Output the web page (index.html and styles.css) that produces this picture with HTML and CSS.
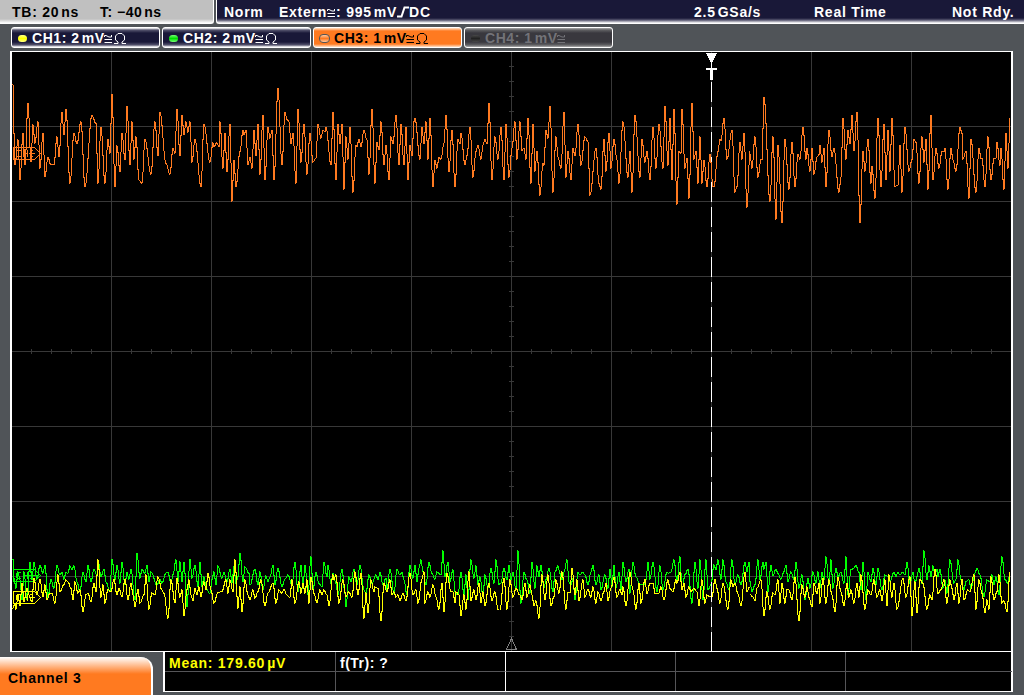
FILE: index.html
```html
<!DOCTYPE html>
<html lang="en">
<head>
    <meta charset="UTF-8">
    <title>Oscilloscope</title>
    <link rel="stylesheet" href="styles.css">
</head>
<body>

<div class="topbar">
    <div class="timebase">
        <span class="tb">TB: 20<i></i>ns</span>
        <span class="tpos">T: &minus;40<i></i>ns</span>
    </div>
    <div class="status">
        <span class="norm">Norm</span>
        <span class="source">Extern<svg class="sym" viewBox="0 0 9 9"><use href="#coupling"/></svg>: 995<i></i>mV<svg class="edge" viewBox="0 0 12 12"><path d="M0 10.5h4.5l3-9H12"/></svg>DC</span>
        <span class="rate">2.5<i></i>GSa/s</span>
        <span class="mode">Real Time</span>
        <span class="ready">Not Rdy.</span>
    </div>
</div>

<div class="channels">
    <div class="chip ch1"><b class="led"></b><span>CH1: 2<i></i>mV</span><svg class="sym" viewBox="0 0 9 9"><use href="#coupling"/></svg><svg class="ohm" viewBox="0 0 12 11"><use href="#ohm"/></svg></div>
    <div class="chip ch2"><b class="led"></b><span>CH2: 2<i></i>mV</span><svg class="sym" viewBox="0 0 9 9"><use href="#coupling"/></svg><svg class="ohm" viewBox="0 0 12 11"><use href="#ohm"/></svg></div>
    <div class="chip ch3"><b class="led"></b><span>CH3: 1<i></i>mV</span><svg class="sym" viewBox="0 0 9 9"><use href="#coupling"/></svg><svg class="ohm" viewBox="0 0 12 11"><use href="#ohm"/></svg></div>
    <div class="chip ch4"><b class="led"></b><span>CH4: 1<i></i>mV</span><svg class="sym" viewBox="0 0 9 9"><use href="#coupling"/></svg></div>
</div>

<div class="screen">
<svg class="plot" viewBox="12 52 999 599">
    <defs>
        <g id="coupling"><path d="M.5 3V1.5h1.5l3 1.5h2.5V1M.5 5.5h7.5M.5 8.5h7.5"/></g>
        <g id="ohm"><path d="M0 10.5h4V9L1.5 7V3L4 .5h4L10.5 3v4L8 9v1.5h4"/></g>
        <g id="tag"><path d="M.5 .5h21l6 6-6 6H.5zM4 3.5h4M4 9.5h4M3.5 4v5M10.5 3v7M14.5 3v7M10 6.5h5M17 3.5h3M16 6.5h6M17 9.5h3"/></g>
    </defs>

    <path class="grid" d="M111.5 52v599M211.5 52v599M311.5 52v599M411.5 52v599M511.5 52v599M611.5 52v599M711.5 52v599M811.5 52v599M911.5 52v599
        M12 126.5h999M12 201.5h999M12 276.5h999M12 351.5h999M12 426.5h999M12 501.5h999M12 576.5h999"/>
    <!-- minor divisions on the centre lines -->
    <path class="ticks" stroke-dasharray="1 14" d="M511.5 66v585"/>
    <path class="ticks" stroke-dasharray="1 19" d="M31 351.5h980"/>
    <path class="mark" d="M511.5 638.5l-5 11h10z"/>

    <!-- turning points of the traces, in thirds of a pixel -->
    <g class="trace green">
        <polyline transform="translate(0 540) scale(.33333)" points="37,58 40,115 46,145 54,95 60,120 66,180 72,95 80,180 89,67 95,120 102,67 110,118 119,76 127,100 133,76 142,172 152,118 160,145 171,76 178,105 184,97 191,118 197,97 202,100 210,78 215,90 221,78 230,125 240,155 249,97 257,125 264,76 272,125 282,88 290,105 294,60 303,110 312,88 318,125 328,155 336,58 344,120 351,76 359,130 366,67 374,135 381,97 386,118 393,88 403,180 411,40 418,115 426,88 434,100 440,76 447,125 453,95 470,135 478,118 486,130 497,100 503,97 512,130 519,105 526,60 532,125 540,65 545,125 552,67 560,200 568,58 576,115 585,76 594,140 600,67 606,140 612,110 618,145 628,160 636,120 642,95 648,135 654,78 664,115 672,97 680,125 688,88 695,130 700,80 706,130 712,110 720,40 727,125 734,80 745,100 750,135"/>
        <polyline transform="translate(250 540) scale(.33333)" points="0,135 13,88 24,135 30,95 38,150 46,108 52,125 58,112 68,76 75,135 84,85 96,140 104,118 114,105 126,135 135,67 144,155 151,76 158,145 165,76 174,165 183,50 189,150 198,97 206,130 214,140 222,67 229,110 234,76 241,130 249,100 257,130 264,165 276,88 283,160 288,200 297,110 303,125 312,88 319,135 330,76 340,150 347,160 356,105 365,130 376,105 384,120 390,97 399,135 406,115 411,150 420,88 432,160 441,88 449,105 454,97 462,120 470,165 480,76 487,115 494,76 500,125 505,85 513,60 519,95 526,135 537,67 546,100 554,118 560,95 572,105 578,32 585,110 592,67 600,125 607,90 615,155 624,165 632,97 640,165 646,105 654,180 663,60 670,115 676,78 683,135 689,110 697,170 705,105 713,145 722,85 731,130 738,60 745,135 752,128"/>
        <polyline transform="translate(500 540) scale(.33333)" points="2,128 12,85 20,120 26,76 33,120 39,97 47,150 54,32 63,190 72,97 80,120 88,160 96,67 104,145 111,78 117,110 123,76 131,145 138,120 146,85 157,155 165,97 173,78 180,100 185,120 192,97 200,60 207,125 213,135 219,115 225,180 234,97 240,105 247,97 253,105 262,135 272,97 279,76 287,135 295,105 303,150 313,105 322,145 329,88 335,140 341,76 348,145 355,97 363,150 369,67 377,125 385,88 390,160 399,67 408,110 418,135 430,135 436,120 442,67 450,118 459,67 469,155 480,78 488,150 500,97 506,100 513,97 522,60 530,125 538,50 546,150 554,105 563,88 575,190 584,67 592,145 600,60 608,180 616,60 623,150 633,135 641,75 648,90 654,60 661,118 668,60 676,125 687,150 696,60 703,135 713,105 722,135 733,67 740,95 746,67 750,125"/>
        <polyline transform="translate(750 540) scale(.33333)" points="0,125 6,155 14,135 24,60 30,120 37,67 42,88 47,67 54,155 62,76 68,108 76,88 84,100 93,118 100,95 106,76 114,125 122,95 130,118 138,67 147,145 156,105 165,180 172,115 179,145 188,95 196,130 202,95 208,145 215,97 221,120 228,50 235,135 241,60 248,145 257,85 264,110 271,97 280,130 287,50 294,165 303,90 310,85 316,76 325,97 333,150 339,67 347,180 354,97 361,125 368,85 376,135 384,85 395,150 403,105 415,110 420,125 430,97 437,110 443,97 450,105 457,97 463,105 471,67 480,130 487,97 494,135 500,110 507,85 514,130 522,32 529,120 535,78 541,110 547,78 554,105 560,88 564,110 570,88 577,145 583,120 590,160 600,60 610,130 616,118 624,60 632,120 640,150 648,125 655,120 663,145 673,100 681,85 690,105 701,170 711,120 720,125 724,105 730,135 738,110 747,165 756,50 763,118 772,130 780,95"/>
        <use href="#tag" x="13" y="569"/>
    </g>
    <g class="trace yellow">
        <polyline transform="translate(0 540) scale(.33333)" points="37,205 45,190 46,208 52,165 60,198 66,130 72,185 80,145 87,165 95,185 102,115 111,165 120,118 128,170 134,135 140,180 148,160 156,160 164,190 174,105 180,155 190,135 197,120 204,125 212,145 219,180 225,125 232,160 238,150 249,215 257,165 264,160 272,185 282,130 288,155 293,60 301,172 309,135 315,190 324,148 333,155 342,118 350,165 356,145 366,170 375,118 383,180 391,130 398,165 405,200 413,148 420,190 432,165 438,105 447,208 456,158 463,165 473,110 484,150 490,160 502,235 513,120 524,188 531,115 538,172 545,150 552,227 560,150 565,120 571,165 578,182 585,145 590,165 596,140 603,170 610,125 616,150 622,100 632,150 640,190 652,158 664,155 676,120 684,160 690,120 697,155 705,60 714,205 720,140 726,215 735,120 743,165 750,180"/>
        <polyline transform="translate(250 540) scale(.33333)" points="0,180 8,150 15,175 24,155 33,120 43,198 54,160 68,130 78,190 87,150 94,160 102,148 109,165 120,172 126,120 133,190 145,125 151,160 157,130 165,160 171,120 175,190 183,112 192,160 201,188 209,150 216,165 222,150 229,165 237,198 247,105 252,120 258,105 267,190 277,120 286,170 297,155 304,172 313,95 322,165 331,100 342,235 348,158 354,218 362,120 370,155 374,140 382,145 391,243 400,130 409,155 418,120 425,165 430,155 438,172 444,165 450,182 458,160 466,182 480,100 488,165 496,150 504,190 514,118 520,95 525,190 532,155 538,172 549,135 557,170 567,208 576,130 582,215 591,100 602,155 608,155 613,188 618,155 625,165 633,227 640,165 646,208 655,95 662,182 672,150 678,180 685,130 691,188 698,155 704,198 715,130 724,182 733,155 743,208 750,208"/>
        <polyline transform="translate(500 540) scale(.33333)" points="0,208 11,115 20,208 30,120 38,172 48,145 60,165 66,180 73,130 80,172 88,135 95,165 102,198 108,182 115,235 125,105 135,180 143,105 151,198 160,170 168,120 176,160 186,95 196,208 203,158 208,158 216,85 225,165 230,120 237,182 248,120 255,172 264,148 272,172 279,140 287,190 294,155 301,182 310,155 316,130 324,182 332,145 342,112 350,172 358,148 364,165 369,140 378,198 390,97 398,150 408,208 416,130 423,190 433,118 440,162 450,130 458,130 465,160 475,160 481,140 492,180 502,120 510,145 518,155 526,120 530,130 538,97 544,150 550,130 558,172 566,140 572,155 580,145 590,155 597,198 606,120 613,190 620,165 628,170 636,172 643,118 650,145 659,190 669,130 682,208 692,120 699,140 705,130 712,162 722,198 733,97 740,155 748,140 750,165"/>
        <polyline transform="translate(750 540) scale(.33333)" points="0,165 8,170 15,182 21,145 32,120 42,227 50,155 60,208 69,158 75,165 82,120 90,190 96,130 103,190 110,150 117,150 125,180 135,112 147,243 156,135 163,172 170,140 177,172 185,200 192,130 199,162 205,130 210,190 217,115 226,190 236,120 245,165 255,215 264,112 272,155 282,198 289,130 297,172 303,150 311,190 321,130 327,172 333,105 345,208 353,150 361,165 370,120 379,172 388,150 396,182 404,120 411,198 417,105 425,172 432,130 441,208 457,115 468,172 478,110 486,227 493,125 501,218 509,118 519,130 529,208 540,165 546,180 554,88 563,162 572,150 580,120 589,190 598,120 606,145 612,180 620,130 627,190 634,118 642,180 652,150 660,155 670,105 678,208 686,120 694,160 703,218 710,180 716,208 722,110 732,180 740,155 747,105 755,190 762,182 771,215 780,95"/>
        <use href="#tag" x="13" y="591"/>
    </g>
    <path class="trigger" stroke-dasharray="20 5" d="M711.5 82v569"/>
    <path class="trigger" d="M711.5 60v20"/>
    <path class="trigger-head" d="M706 53h11l-5 10h-1zM706 68h11v2h-4v10h-3v-10h-4z"/>
    <g class="trace orange">
        <polyline transform="translate(0 80) scale(.33333)" points="37,15 39,30 41,160 45,255 53,180 60,300 69,160 75,255 84,70 93,245 99,135 105,190 114,125 120,265 128,160 135,290 144,232 153,255 160,255 169,170 177,230 186,97 192,165 198,88 208,310 222,160 229,192 242,125 255,320 276,106 286,130 294,310 303,142 315,310 324,178 330,220 336,43 345,320 351,198 359,275 366,160 373,240 381,79 388,255 396,125 402,238 408,170 416,300 425,310 435,178 452,283 464,125 473,228 480,97 497,250 510,283 519,205 523,220 531,88 539,228 546,106 552,165 558,125 563,157 570,125 576,247 585,178 602,320 612,133 630,247 638,188 642,200 649,188 655,200 660,125 669,265 675,160 681,275 690,133 696,364 702,241 708,320 720,215 729,151 732,165 736,151 744,255 750,232"/>
        <polyline transform="translate(250 80) scale(.33333)" points="0,232 5,265 12,151 18,228 24,133 30,283 39,106 45,300 54,142 60,175 64,151 72,300 84,25 96,255 105,97 110,118 115,125 123,192 129,160 137,310 144,88 153,247 162,133 171,283 180,160 188,247 196,235 204,133 211,175 219,151 223,155 228,142 243,255 249,97 258,300 264,133 270,192 276,133 282,328 288,170 294,238 300,142 309,337 316,196 321,200 325,178 332,200 341,151 349,180 357,283 366,88 373,310 381,187 386,210 393,125 402,255 408,196 415,300 423,170 429,192 438,106 447,255 453,133 462,255 468,142 474,300 480,196 486,228 490,125 495,115 509,238 516,142 521,192 528,125 534,238 540,115 549,320 555,241 561,265 567,232 573,238 580,190 588,106 597,275 606,151 615,320 624,178 628,192 633,160 643,255 651,228 660,142 668,292 676,215 684,196 691,238 698,196 704,178 709,192 717,70 726,300 735,170 744,238 753,142"/>
        <polyline transform="translate(500 80) scale(.33333)" points="3,142 12,300 18,133 27,292 36,205 43,125 51,238 60,125 66,212 70,205 76,238 84,115 91,310 99,133 105,274 111,214 120,346 127,250 131,256 138,151 144,175 150,79 159,337 168,170 174,230 183,265 192,97 198,292 204,214 213,300 219,205 225,228 234,133 243,256 255,170 262,185 270,346 288,205 296,310 303,328 312,178 318,274 327,160 333,265 342,178 349,240 357,310 369,125 384,292 390,214 396,337 405,106 418,292 426,178 435,247 441,214 450,300 459,142 468,265 477,133 489,265 495,79 504,256 510,115 516,300 522,88 531,373 537,214 541,220 546,88 555,265 560,235 567,355 576,70 582,238 588,214 594,310 600,170 606,310 612,241 621,320 628,223 637,320 642,320 652,215 658,178 663,183 670,115 680,238 694,151 705,337 711,320 720,187 726,238 732,160 741,382 748,214 750,223"/>
        <polyline transform="translate(750 80) scale(.33333)" points="0,223 6,265 15,170 24,292 31,240 35,240 42,52 60,364 69,170 78,418 84,196 94,428 105,178 115,328 124,187 134,320 144,223 149,238 159,142 166,238 171,205 180,274 186,205 192,283 200,232 205,225 210,196 216,247 222,205 228,320 237,151 244,230 250,205 265,337 271,292 279,115 288,238 294,151 300,192 306,106 312,212 321,97 330,428 339,214 345,274 352,178 361,310 366,259 373,355 382,115 393,320 402,133 408,300 414,151 420,274 426,115 435,320 443,316 450,196 456,337 465,142 475,274 484,240 491,178 497,187 507,310 515,170 522,247 528,178 534,328 541,106 549,300 558,205 567,265 575,215 582,215 585,205 594,328 602,205 608,240 618,274 628,142 634,160 639,238 646,214 655,355 663,178 678,337 685,205 691,235 696,235 703,320 713,170 723,300 731,235 736,235 741,187 750,256 753,205 762,328 768,160 774,265 780,115"/>
        <use href="#tag" x="13" y="147"/>
    </g>
</svg>
</div>

<div class="bottom">
    <div class="tab">Channel 3</div>
    <div class="measure">
        <div class="mean">Mean: 179.60<i></i>&micro;V</div>
        <div class="half">f(Tr): ?</div>
        <div></div>
        <div></div>
        <div></div>
        <div></div>
        <div class="half"></div>
        <div></div>
        <div></div>
        <div></div>
    </div>
</div>

<script>
    // fill in one sample per pixel column and join the columns with vertical runs
    document.querySelectorAll('.trace polyline').forEach(function(line) {
        const turns = line.getAttribute('points').split(' ').map(function(p) {
            const xy = p.split(',').map(Number);
            return [Math.floor(xy[0] / 3 - 0.2), xy[1]];
        });
        let y = turns[0][1];
        const out = [(turns[0][0] * 3 + 1.5) + ',' + y];
        for (let i = 1; i < turns.length; i++) {
            const a = turns[i - 1];
            const b = turns[i];
            for (let c = a[0] + 1; c <= b[0]; c++) {
                const t = (c - a[0]) / (b[0] - a[0]);
                const next = a[1] + (b[1] - a[1]) * (1 - Math.cos(Math.PI * t)) / 2;
                const x = c * 3 + 1.5;
                out.push(x + ',' + y, x + ',' + next);
                y = next;
            }
        }
        line.setAttribute('points', out.join(' '));
    });
</script>

</body>
</html>
```
FILE: styles.css
```css
* { box-sizing: border-box; }
body {
    margin: 0;
    width: 1024px;
    height: 695px;
    overflow: hidden;
    background-color: #505458;
    font-family: "Liberation Sans", Arial, sans-serif;
    font-weight: bold;
    font-size: 14px;
    line-height: 16px;
    color: white;
    white-space: nowrap;
    letter-spacing: 0.75px;
}
/* thin space between value and unit */
i { display: inline-block; width: 2px; }
svg { display: block; }

.topbar {
    display: flex;
    height: 24px;
    gap: 2px;
}
.timebase {
    display: flex;
    width: 214px;
    padding: 4px 0 0 12px;
    background: linear-gradient(#c0c0c0 19px, #fff 23px);
    border-right: 1px solid white;
    border-bottom: 1px solid white;
    border-bottom-right-radius: 3px;
    color: black;
}
.tb { width: 88px; }
.tpos { letter-spacing: 0.5px; }
.status {
    display: flex;
    flex: 1;
    padding: 4px 0 0 7px;
    background: linear-gradient(#191838 18px, #55546e 20px, #fff 23px);
    border-left: 1px solid white;
    border-bottom: 1px solid white;
    border-bottom-left-radius: 3px;
}
.norm { width: 55px; }
.source { width: 415px; display: flex; white-space: pre; }
.source i { height: 1px; }
.rate { width: 120px; }
.mode { width: 138px; }
.sym {
    width: 9px;
    height: 9px;
    margin-top: 4px;
    fill: none;
    stroke: currentColor;
    stroke-width: 1;
}
.edge {
    width: 12px;
    height: 12px;
    margin-top: 2px;
    fill: none;
    stroke: currentColor;
    stroke-width: 2;
}

.channels {
    display: flex;
    gap: 2px;
    padding: 3px 0 3px 11px;
    height: 27px;
}
.chip {
    display: flex;
    width: 149px;
    height: 21px;
    padding: 2px 0 0 6px;
    border: 1px solid white;
    border-radius: 3px;
    background: linear-gradient(#fff, #55546e 2px, #191838 5px, #191838 14px, #55546e 17px, #fff);
}
.led {
    width: 9px;
    height: 7px;
    margin: 5px 5px 0 0;
    border-radius: 4px;
}
.chip span { width: 72px; letter-spacing: 0.55px; }
.chip .sym { margin: 4px 1px 0 0; }
.ohm {
    width: 12px;
    height: 11px;
    margin-top: 3px;
    fill: none;
    stroke: currentColor;
}
.ch1 .led { background: linear-gradient(#ff8, #ff0 50%, #ff8); }
.ch2 .led { background: linear-gradient(#7f7, #0d0 50%, #7f7); }
.ch3 {
    background: linear-gradient(#ffe0c8, #ff7a20 3px, #ff7a20 16px, #ffe0c8);
    color: black;
}
.ch3 .led {
    width: 11px;
    height: 9px;
    margin: 4px 4px 0 -1px;
    border: 1px solid #555;
    background: linear-gradient(#ffc8a0, #ff7a20, #ffc8a0);
}
.ch4 {
    background: linear-gradient(#aaa, #606063 2px, #39383e 5px, #39383e 14px, #606063 17px, #aaa);
    color: #737378;
}
.ch4 .led { background: linear-gradient(#484848, #222 50%, #484848); }

.screen {
    width: 1003px;
    height: 601px;
    margin-left: 10px;
    border: solid white;
    border-width: 1px 2px;
    background-color: black;
}
.plot {
    width: 999px;
    height: 599px;
    shape-rendering: crispEdges;
    fill: none;
}
.grid { stroke: #383838; }
.ticks { stroke: #383838; stroke-width: 5; }
.mark { stroke: #808080; }
.trace { stroke-width: 1; }
.trace polyline { stroke-width: 3; }
.orange { stroke: #ff7a20; }
.green { stroke: #00ff00; }
.yellow { stroke: #ffff00; }
.trigger { stroke: white; }
.trigger-head { fill: white; }

.bottom {
    display: flex;
    height: 43px;
}
.tab {
    width: 153px;
    height: 38px;
    margin: 5px 10px 0 0;
    padding: 13px 0 0 8px;
    background: linear-gradient(#fff, #ff7a20 17px);
    border-right: 2px solid white;
    border-top-right-radius: 12px;
    color: black;
}
.measure {
    display: grid;
    grid-template-columns: 171px 170px 170px 170px 166px;
    grid-template-rows: 20px 19px;
    width: 850px;
    height: 40px;
    border: 2px solid white;
    border-top: 0;
    border-bottom-width: 1px;
    background-color: black;
}
.measure div {
    padding: 3px 0 0 4px;
    border-right: 1px solid #555558;
    border-bottom: 1px solid #555558;
}
.measure .half { border-right-color: white; letter-spacing: 0.5px; }
.measure div:nth-child(5n) { border-right: 0; }
.measure div:nth-child(n+6) { border-bottom: 0; }
.measure .mean { color: yellow; }
```
